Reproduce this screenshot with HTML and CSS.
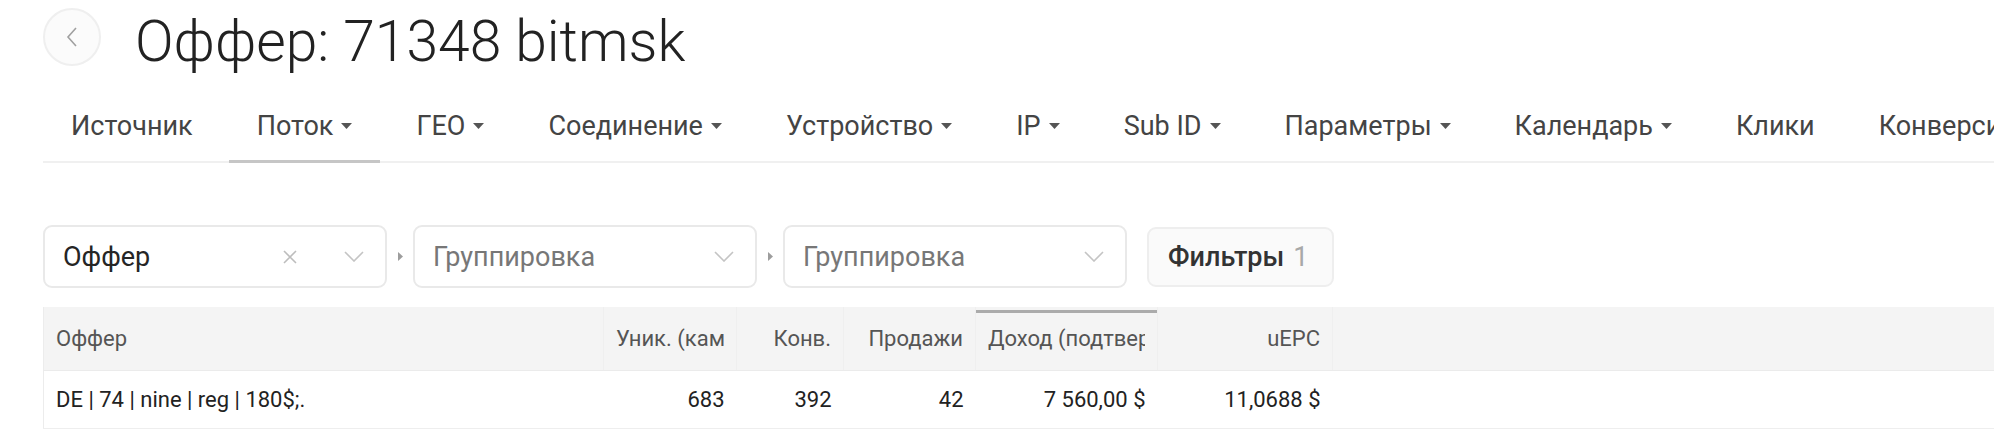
FILE: index.html
```html
<!DOCTYPE html>
<html lang="ru">
<head>
<meta charset="utf-8">
<title>Оффер: 71348 bitmsk</title>
<link rel="stylesheet" href="styles.css">
</head>
<body>
<div class="page">
  <header class="head">
    <button class="back" aria-label="Назад">
      <svg width="14" height="22" viewBox="0 0 14 22"><polyline points="11,2 3,11 11,20" fill="none" stroke="#a0a0a0" stroke-width="1.6"/></svg>
    </button>
    <h1 class="title">Оффер: 71348 bitmsk</h1>
  </header>

  <nav class="tabs">
    <a class="tab">Источник</a>
    <a class="tab active">Поток<svg class="caret" width="11" height="6" viewBox="0 0 11 6"><polygon points="0,0 11,0 5.5,6"/></svg></a>
    <a class="tab">ГЕО<svg class="caret" width="11" height="6" viewBox="0 0 11 6"><polygon points="0,0 11,0 5.5,6"/></svg></a>
    <a class="tab">Соединение<svg class="caret" width="11" height="6" viewBox="0 0 11 6"><polygon points="0,0 11,0 5.5,6"/></svg></a>
    <a class="tab">Устройство<svg class="caret" width="11" height="6" viewBox="0 0 11 6"><polygon points="0,0 11,0 5.5,6"/></svg></a>
    <a class="tab">IP<svg class="caret" width="11" height="6" viewBox="0 0 11 6"><polygon points="0,0 11,0 5.5,6"/></svg></a>
    <a class="tab">Sub ID<svg class="caret" width="11" height="6" viewBox="0 0 11 6"><polygon points="0,0 11,0 5.5,6"/></svg></a>
    <a class="tab">Параметры<svg class="caret" width="11" height="6" viewBox="0 0 11 6"><polygon points="0,0 11,0 5.5,6"/></svg></a>
    <a class="tab">Календарь<svg class="caret" width="11" height="6" viewBox="0 0 11 6"><polygon points="0,0 11,0 5.5,6"/></svg></a>
    <a class="tab">Клики</a>
    <a class="tab">Конверсии</a>
  </nav>

  <div class="toolbar">
    <div class="select">
      <span class="value">Оффер</span>
      <svg class="clear" width="14" height="14" viewBox="0 0 14 14"><path d="M1 1 L13 13 M13 1 L1 13" stroke="#bdbdbd" stroke-width="1.6" fill="none"/></svg>
      <svg class="chev" width="20" height="11" viewBox="0 0 20 11"><polyline points="1,1 10,10 19,1" fill="none" stroke="#c4c4c4" stroke-width="1.6"/></svg>
    </div>
    <span class="sep"><svg width="5" height="9" viewBox="0 0 5 9"><polygon points="0,0 5,4.5 0,9" fill="#9d9d9d"/></svg></span>
    <div class="select">
      <span class="value ph">Группировка</span>
      <svg class="chev" width="20" height="11" viewBox="0 0 20 11"><polyline points="1,1 10,10 19,1" fill="none" stroke="#c4c4c4" stroke-width="1.6"/></svg>
    </div>
    <span class="sep"><svg width="5" height="9" viewBox="0 0 5 9"><polygon points="0,0 5,4.5 0,9" fill="#9d9d9d"/></svg></span>
    <div class="select">
      <span class="value ph">Группировка</span>
      <svg class="chev" width="20" height="11" viewBox="0 0 20 11"><polyline points="1,1 10,10 19,1" fill="none" stroke="#c4c4c4" stroke-width="1.6"/></svg>
    </div>
    <button class="filters">Фильтры<span class="count">1</span></button>
  </div>

  <table class="grid">
    <colgroup>
      <col class="c-offer"><col class="c-uniq"><col class="c-conv"><col class="c-sales"><col class="c-income"><col class="c-epc"><col>
    </colgroup>
    <thead>
      <tr>
        <th class="left"><div class="cell">Оффер</div></th>
        <th class="num"><div class="cell">Уник. (кампания)</div></th>
        <th class="num"><div class="cell">Конв.</div></th>
        <th class="num"><div class="cell">Продажи</div></th>
        <th class="num sorted"><div class="cell">Доход (подтвержденный)</div></th>
        <th class="num"><div class="cell">uEPC</div></th>
        <th class="fill"></th>
      </tr>
    </thead>
    <tbody>
      <tr>
        <td class="left">DE | 74 | nine | reg | 180$;.</td>
        <td class="num">683</td>
        <td class="num">392</td>
        <td class="num">42</td>
        <td class="num">7 560,00 $</td>
        <td class="num">11,0688 $</td>
        <td class="fill"></td>
      </tr>
    </tbody>
  </table>
</div>
</body>
</html>
```

FILE: styles.css
```css
html, body {
  margin: 0;
  padding: 0;
  background: #ffffff;
}

body {
  font-family: Roboto, "Noto Sans", "Liberation Sans", sans-serif;
  color: #222222;
  overflow: hidden;
}

.page {
  padding-left: 43px;
}

/* ---------- heading ---------- */
.head {
  display: flex;
  align-items: center;
  height: 74px;
}

.back {
  flex: 0 0 auto;
  width: 58px;
  height: 58px;
  padding: 0;
  border: 2px solid #efefef;
  border-radius: 50%;
  background: #fbfbfb;
  display: flex;
  align-items: center;
  justify-content: center;
}

.title {
  margin: 0 0 0 34px;
  padding-top: 8px;
  font-size: 57px;
  font-weight: 300;
  color: #222222;
  white-space: nowrap;
}

/* ---------- tabs ---------- */
.tabs {
  display: flex;
  margin-top: 37px;
  border-bottom: 2px solid #f0f0f0;
  white-space: nowrap;
}

.tab {
  flex: 0 0 auto;
  display: flex;
  align-items: center;
  padding: 0 28px 19px;
  margin-right: 8px;
  margin-bottom: -2px;
  font-size: 27px;
  line-height: 30px;
  color: #444444;
  border-bottom: 3px solid transparent;
}

.tab.active {
  border-bottom-color: #c6c6c6;
}

.caret {
  margin-left: 8px;
  fill: #555555;
}

/* ---------- toolbar ---------- */
.toolbar {
  display: flex;
  align-items: center;
  margin-top: 62px;
}

.select {
  box-sizing: border-box;
  width: 344px;
  height: 63px;
  display: flex;
  align-items: center;
  padding: 0 21px 0 18px;
  border: 2px solid #e9e9e9;
  border-radius: 9px;
  background: #ffffff;
}

.value {
  margin-right: auto;
  font-size: 27px;
  color: #252525;
  white-space: nowrap;
}

.value.ph {
  color: #777777;
}

.clear {
  margin-right: 47px;
}

.sep {
  width: 26px;
  display: flex;
  justify-content: center;
}

.filters {
  box-sizing: border-box;
  height: 60px;
  margin-left: 20px;
  padding: 0 24px 0 19px;
  border: 2px solid #eeeeee;
  border-radius: 9px;
  background: #fafafa;
  font-family: inherit;
  font-size: 27px;
  font-weight: 500;
  color: #333333;
}

.count {
  margin-left: 9px;
  font-weight: 400;
  color: #a8a8a8;
}

/* ---------- table ---------- */
.grid {
  margin-top: 19px;
  width: 100%;
  table-layout: fixed;
  border-collapse: collapse;
  border-left: 1px solid #ececec;
}

.c-offer  { width: 560px; }
.c-uniq   { width: 133px; }
.c-conv   { width: 107px; }
.c-sales  { width: 132px; }
.c-income { width: 182px; }
.c-epc    { width: 175px; }

.grid th {
  height: 63px;
  padding: 0 12px;
  background: #f4f4f4;
  border-bottom: 1px solid #ebebeb;
  border-right: 1px solid #efefef;
  font-size: 22px;
  font-weight: 400;
  color: #555555;
}

.cell {
  white-space: nowrap;
  overflow: hidden;
  text-overflow: clip;
}

.grid th.fill {
  border-right: none;
}

.grid th.sorted {
  background: linear-gradient(#ababab, #ababab) no-repeat 0 3px / 100% 3px, #f4f4f4;
}

.grid td {
  height: 57px;
  padding: 0 12px;
  border-bottom: 1px solid #eeeeee;
  font-size: 22px;
  color: #222222;
  white-space: nowrap;
  overflow: hidden;
}

.left { text-align: left; }
.num  { text-align: right; }
```
